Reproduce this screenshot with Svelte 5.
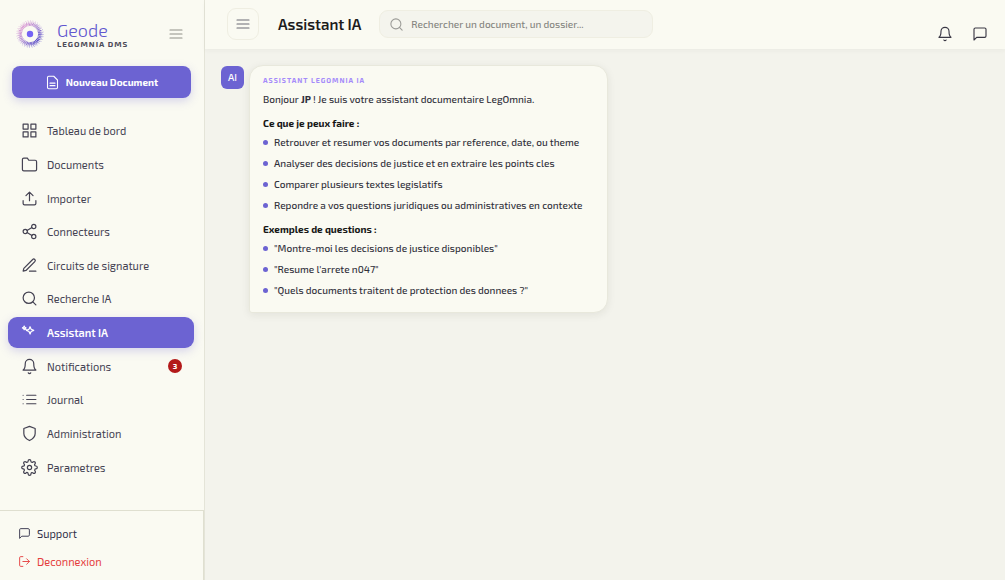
<script lang="ts">
  type IconName = 'grid' | 'folder' | 'upload' | 'share' | 'pen' | 'search' | 'spark' | 'bell' | 'list' | 'shield' | 'gear' | 'chat' | 'logout' | 'file' | 'menu';

  interface NavItem {
    label: string;
    icon: IconName;
    badge?: number;
  }

  const nav: NavItem[] = [
    { label: 'Tableau de bord', icon: 'grid' },
    { label: 'Documents', icon: 'folder' },
    { label: 'Importer', icon: 'upload' },
    { label: 'Connecteurs', icon: 'share' },
    { label: 'Circuits de signature', icon: 'pen' },
    { label: 'Recherche IA', icon: 'search' },
    { label: 'Assistant IA', icon: 'spark' },
    { label: 'Notifications', icon: 'bell', badge: 3 },
    { label: 'Journal', icon: 'list' },
    { label: 'Administration', icon: 'shield' },
    { label: 'Parametres', icon: 'gear' },
  ];

  const abilities = [
    'Retrouver et resumer vos documents par reference, date, ou theme',
    'Analyser des decisions de justice et en extraire les points cles',
    'Comparer plusieurs textes legislatifs',
    'Repondre a vos questions juridiques ou administratives en contexte',
  ];

  const examples = [
    '"Montre-moi les decisions de justice disponibles"',
    `"Resume l'arrete n047"`,
    '"Quels documents traitent de protection des donnees ?"',
  ];

  // dotted rings of the logo
  const rings = [
    { r: 8.6, w: 1.2, dash: '0.9 0.5' },
    { r: 9.8, w: 1.4, dash: '1.2 0.4' },
    { r: 11, w: 1.2, dash: '1 0.7' },
    { r: 12.2, w: 0.9, dash: '0.7 1.2' },
    { r: 13.3, w: 0.7, dash: '0.6 2' },
  ];

  let active = $state('Assistant IA');
  let collapsed = $state(false);
  let query = $state('');
</script>

{#snippet icon(name: IconName)}
  <svg class="icon" viewBox="0 0 24 24" aria-hidden="true">
    {#if name === 'grid'}
      <path d="M3 3h7v7H3zM14 3h7v7h-7zM14 14h7v7h-7zM3 14h7v7H3z" />
    {:else if name === 'folder'}
      <path d="M22 19a2 2 0 0 1-2 2H4a2 2 0 0 1-2-2V5a2 2 0 0 1 2-2h5l2 3h9a2 2 0 0 1 2 2z" />
    {:else if name === 'upload'}
      <path d="M21 15v4a2 2 0 0 1-2 2H5a2 2 0 0 1-2-2v-4M17 8l-5-5-5 5M12 3v12" />
    {:else if name === 'share'}
      <circle cx="18" cy="5" r="3" /><circle cx="6" cy="12" r="3" /><circle cx="18" cy="19" r="3" />
      <path d="M8.6 13.5l6.8 4M15.4 6.5l-6.8 4" />
    {:else if name === 'pen'}
      <path d="M12 20h9M16.5 3.5a2.1 2.1 0 0 1 3 3L7 19l-4 1 1-4z" />
    {:else if name === 'search'}
      <circle cx="11" cy="11" r="8" /><path d="M21 21l-4.3-4.3" />
    {:else if name === 'spark'}
      <path d="M12.8 3.8l1.5 3.7L18 9l-3.700 1.500-1.500 3.700-1.500-3.700L7.600 9l3.700-1.500zM4.500 3l.8 1.700 1.700.8-1.700.8-.8 1.700-.8-1.700L2 5.500l1.700-.8zM6.500 7.500l2 1.200" />
    {:else if name === 'bell'}
      <path d="M18 8A6 6 0 0 0 6 8c0 7-3 9-3 9h18s-3-2-3-9M13.7 21a2 2 0 0 1-3.4 0" />
    {:else if name === 'list'}
      <path d="M8 6h13M8 12h13M8 18h13M3 6h.01M3 12h.01M3 18h.01" />
    {:else if name === 'shield'}
      <path d="M12 22s8-4 8-10V5l-8-3-8 3v7c0 6 8 10 8 10z" />
    {:else if name === 'gear'}
      <circle cx="12" cy="12" r="3" />
      <path d="M19.4 15a1.65 1.65 0 0 0 .33 1.82l.06.06a2 2 0 1 1-2.83 2.83l-.06-.06a1.65 1.65 0 0 0-2.8 1.17V21a2 2 0 0 1-4 0v-.09a1.65 1.65 0 0 0-2.9-1.26l-.06.06a2 2 0 1 1-2.83-2.83l.06-.06a1.65 1.65 0 0 0-1.17-2.8H3a2 2 0 0 1 0-4h.09a1.65 1.65 0 0 0 1.26-2.9l-.06-.06a2 2 0 1 1 2.83-2.83l.06.06a1.65 1.65 0 0 0 2.8-1.17V3a2 2 0 0 1 4 0v.09a1.65 1.65 0 0 0 2.8 1.17l.06-.06a2 2 0 1 1 2.83 2.83l-.06.06a1.65 1.65 0 0 0 1.17 2.8H21a2 2 0 0 1 0 4h-.09a1.65 1.65 0 0 0-1.51 1.11z" />
    {:else if name === 'chat'}
      <path d="M21 15a2 2 0 0 1-2 2H7l-4 4V5a2 2 0 0 1 2-2h14a2 2 0 0 1 2 2z" />
    {:else if name === 'logout'}
      <path d="M9 21H5a2 2 0 0 1-2-2V5a2 2 0 0 1 2-2h4M16 17l5-5-5-5M21 12H9" />
    {:else if name === 'file'}
      <path d="M14 2H6a2 2 0 0 0-2 2v16a2 2 0 0 0 2 2h12a2 2 0 0 0 2-2V8zM8 13h8M8 17h8" />
    {:else}
      <path d="M3 6h18M3 12h18M3 18h18" />
    {/if}
  </svg>
{/snippet}

<div class="app">
  <aside class="sidebar" class:collapsed>
    <div class="brand">
      <svg class="logo" viewBox="0 0 28 28" aria-hidden="true">
        <defs>
          <linearGradient id="ring" x1="0" y1="0" x2="1" y2="1">
            <stop offset="0.1" stop-color="#df9bd3" />
            <stop offset="0.5" stop-color="#a583d2" />
            <stop offset="0.9" stop-color="#5145c5" />
          </linearGradient>
        </defs>
        {#each rings as ring}
          <circle cx="14" cy="14" r={ring.r} fill="none" stroke="url(#ring)" stroke-width={ring.w} stroke-dasharray={ring.dash} />
        {/each}
        <circle cx="14" cy="14" r="3.2" fill="#7463f4" />
      </svg>
      <div class="brand-text">
        <span class="brand-name">Geode</span>
        <span class="brand-sub">LEGOMNIA DMS</span>
      </div>
      <button type="button" class="brand-toggle" aria-label="Replier le menu" onclick={() => (collapsed = !collapsed)}>
        {@render icon('menu')}
      </button>
    </div>

    <button type="button" class="new-doc">
      {@render icon('file')}
      <span>Nouveau Document</span>
    </button>

    <nav class="nav">
      {#each nav as item (item.label)}
        <a
          class="nav-item"
          class:active={active === item.label}
          href="#{item.icon}"
          aria-current={active === item.label ? 'page' : undefined}
          onclick={() => (active = item.label)}
        >
          {@render icon(item.icon)}
          <span class="nav-label">{item.label}</span>
          {#if item.badge}<span class="badge">{item.badge}</span>{/if}
        </a>
      {/each}
    </nav>

    <div class="side-footer">
      <a class="foot-link" href="#support">{@render icon('chat')}Support</a>
      <a class="foot-link logout" href="#logout">{@render icon('logout')}Deconnexion</a>
    </div>
  </aside>

  <div class="main">
    <header class="topbar">
      <button type="button" class="menu-btn" aria-label="Menu" onclick={() => (collapsed = !collapsed)}>{@render icon('menu')}</button>
      <h1>Assistant IA</h1>
      <label class="search">
        {@render icon('search')}
        <input type="search" bind:value={query} placeholder="Rechercher un document, un dossier..." aria-label="Rechercher" />
      </label>
      <div class="actions">
        <button type="button" aria-label="Notifications">{@render icon('bell')}</button>
        <button type="button" aria-label="Messages">{@render icon('chat')}</button>
      </div>
    </header>

    <main class="thread">
      <div class="avatar">AI</div>
      <article class="bubble">
        <div class="sender">ASSISTANT LEGOMNIA IA</div>
        <p>Bonjour <strong>JP</strong> ! Je suis votre assistant documentaire LegOmnia.</p>
        <h2>Ce que je peux faire :</h2>
        <ul>
          {#each abilities as line}<li>{line}</li>{/each}
        </ul>
        <h2>Exemples de questions :</h2>
        <ul>
          {#each examples as line}<li>{line}</li>{/each}
        </ul>
      </article>
    </main>
  </div>
</div>

<style>
  :global(body) {
    margin: 0;
    background: #f3f3ec;
  }

  .app {
    --accent: #6c63d2;
    --panel: #fafaf2;
    --line: #e4e4d8;
    display: flex;
    min-height: 100vh;
    font-family: 'Exo 2', Roboto, sans-serif;
    font-size: 10px;
    font-weight: 500;
    color: #30303a;
  }
  .app *,
  .app {
    box-sizing: border-box;
  }
  button,
  input {
    font: inherit;
    color: inherit;
  }
  button {
    display: flex;
    align-items: center;
    justify-content: center;
    padding: 0;
    border: none;
    background: none;
    cursor: pointer;
  }
  a {
    color: inherit;
    text-decoration: none;
  }
  .icon {
    width: 16px;
    height: 16px;
    flex-shrink: 0;
    fill: none;
    stroke: currentColor;
    stroke-width: 1.7;
    stroke-linecap: round;
    stroke-linejoin: round;
  }

  .sidebar {
    display: flex;
    flex-direction: column;
    flex: 0 0 205px;
    background: var(--panel);
    border-right: 1px solid var(--line);
  }
  .sidebar.collapsed {
    display: none;
  }
  .brand {
    display: flex;
    align-items: center;
    height: 66px;
    padding: 1px 20px 0 16px;
  }
  .logo {
    width: 28px;
    height: 28px;
    margin-right: 13px;
  }
  .brand-text {
    display: flex;
    flex-direction: column;
    flex: 1;
  }
  .brand-name {
    font-size: 18px;
    font-weight: 300;
    line-height: 20px;
    color: #6156cf;
  }
  .brand-sub {
    font-size: 8px;
    font-weight: 700;
    line-height: 8px;
    letter-spacing: 1px;
    color: #4c4a58;
  }
  .brand-toggle {
    color: #8f8f88;
  }

  .new-doc {
    gap: 6px;
    height: 32px;
    margin: 0 13px 0 12px;
    border-radius: 8px;
    background: var(--accent);
    color: #fff;
    font-weight: 700;
    box-shadow: 0 3px 10px rgba(108, 99, 210, 0.25);
  }
  .new-doc .icon {
    width: 15px;
    height: 15px;
  }

  .nav {
    display: grid;
    grid-auto-rows: 1fr;
    gap: 2px;
    flex: 1;
    padding: 17px 10px 27px 8px;
    font-size: 11px;
    font-weight: 400;
  }
  .nav-item {
    display: flex;
    align-items: center;
    gap: 9px;
    padding: 0 12px 0 13px;
    border-radius: 9px;
    color: #444252;
  }
  .nav-item .icon {
    width: 17px;
    height: 17px;
  }
  .nav-item.active {
    background: var(--accent);
    color: #fff;
    font-weight: 600;
    box-shadow: 0 3px 10px rgba(108, 99, 210, 0.25);
  }
  .nav-label {
    flex: 1;
  }
  .badge {
    width: 14px;
    height: 14px;
    border-radius: 50%;
    background: #b31919;
    color: #fff;
    font-size: 8px;
    font-weight: 700;
    line-height: 14px;
    text-align: center;
  }

  .side-footer {
    display: flex;
    flex-direction: column;
    gap: 8px;
    padding: 12px 18px 9px;
    border-top: 1px solid #dfdfd0;
    border-right: 1px solid #dfdfd0;
    font-size: 11px;
    font-weight: 400;
  }
  .foot-link {
    display: flex;
    align-items: center;
    gap: 6px;
    height: 20px;
    color: #33324a;
  }
  .foot-link .icon {
    width: 13px;
    height: 13px;
  }
  .foot-link.logout {
    color: #e53e3e;
  }

  .main {
    display: flex;
    flex-direction: column;
    flex: 1;
    min-width: 0;
  }
  .topbar {
    display: flex;
    align-items: center;
    height: 49px;
    padding: 0 17px 1px 22px;
    background: var(--panel);
    box-shadow: 0 2px 4px rgba(40, 60, 50, 0.04);
  }
  .menu-btn {
    width: 32px;
    height: 32px;
    border: 1px solid #efeee2;
    border-radius: 9px;
    color: #6b6a75;
  }
  h1 {
    margin: 0 18px 0 19px;
    font-size: 15px;
    font-weight: 600;
    white-space: nowrap;
    color: #1c1c1c;
  }
  .search {
    display: flex;
    align-items: center;
    gap: 7px;
    flex: 0 1 274px;
    height: 28px;
    padding: 0 9px;
    border: 1px solid #efeee2;
    border-radius: 9px;
    background: #f4f4ed;
    color: #9a9a96;
  }
  .search .icon {
    width: 15px;
    height: 15px;
  }
  .search input {
    flex: 1;
    min-width: 0;
    padding: 0;
    border: none;
    outline: none;
    background: none;
  }
  .search input::placeholder {
    color: #85857f;
  }
  .actions {
    display: flex;
    align-self: flex-end;
    gap: 19px;
    margin-left: auto;
    padding-bottom: 6px;
    color: #3a3845;
  }

  .thread {
    display: flex;
    align-items: flex-start;
    gap: 5px;
    padding: 16px;
  }
  .avatar {
    flex-shrink: 0;
    width: 23px;
    height: 23px;
    margin-top: 1px;
    border-radius: 6px;
    background: var(--accent);
    color: #fff;
    line-height: 23px;
    text-align: center;
  }
  .bubble {
    flex: 0 1 359px;
    padding: 8px 13px 13px;
    border: 1px solid #e8e8dc;
    border-radius: 14px 14px 14px 3px;
    background: var(--panel);
    box-shadow: 0 2px 8px rgba(40, 40, 20, 0.08);
    line-height: 18px;
  }
  .sender {
    font-size: 7px;
    font-weight: 700;
    line-height: 12px;
    letter-spacing: 1px;
    color: #a58bfa;
  }
  .bubble p {
    margin: 4px 0 6px;
  }
  .bubble h2 {
    margin: 0;
    font-size: 10px;
    font-weight: 700;
    color: #161616;
  }
  .bubble ul {
    display: flex;
    flex-direction: column;
    gap: 3px;
    margin: 1px 0 6px;
    padding: 0;
    list-style: none;
  }
  .bubble ul:last-child {
    margin-bottom: 0;
  }
  .bubble li {
    display: flex;
    align-items: center;
    gap: 6px;
  }
  .bubble li::before {
    content: '';
    width: 5px;
    height: 5px;
    border-radius: 50%;
    background: var(--accent);
  }
</style>
